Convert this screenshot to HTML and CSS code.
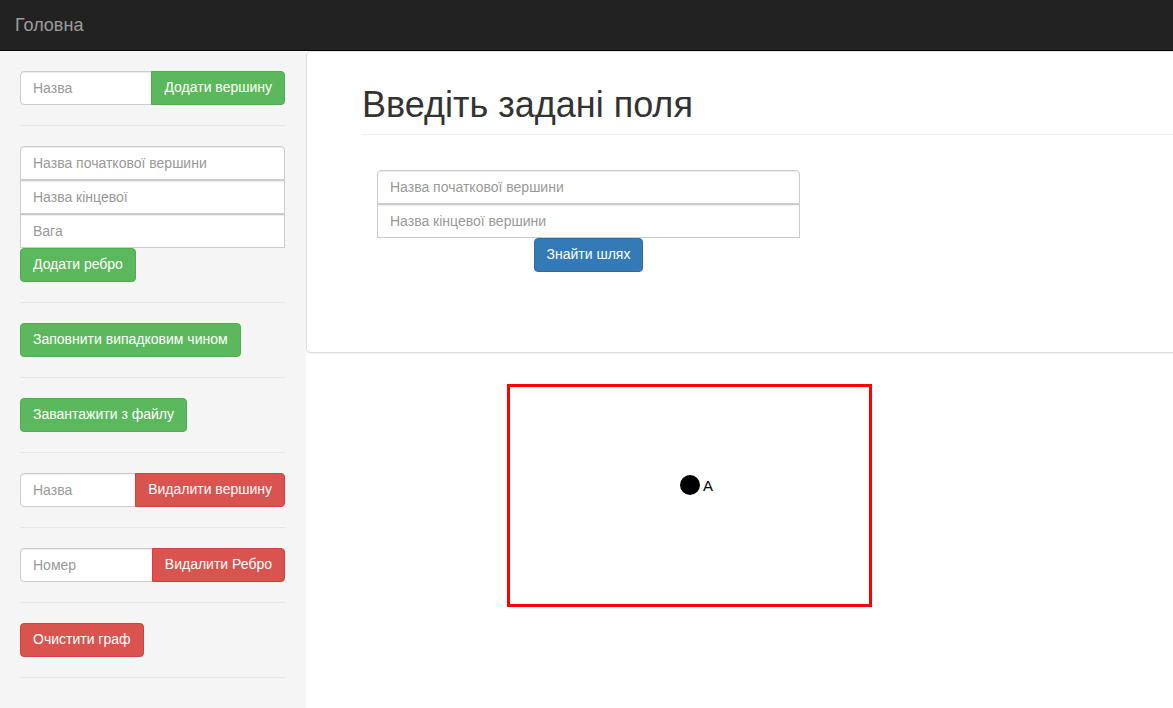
FILE: index.html
```html
<!DOCTYPE html>
<html lang="uk">
<head>
<meta charset="utf-8">
<title>Граф</title>
<link rel="stylesheet" href="styles.css">
</head>
<body>
<nav class="navbar">
  <a class="brand" href="#">Головна</a>
</nav>
<div class="layout">
  <aside class="sidebar">
    <div class="input-group">
      <input class="form-control" type="text" placeholder="Назва">
      <button class="btn btn-success grp-btn">Додати вершину</button>
    </div>
    <hr>
    <div class="stack">
      <input class="form-control" type="text" placeholder="Назва початкової вершини">
      <input class="form-control" type="text" placeholder="Назва кінцевої">
      <input class="form-control" type="text" placeholder="Вага">
    </div>
    <button class="btn btn-success">Додати ребро</button>
    <hr>
    <button class="btn btn-success">Заповнити випадковим чином</button>
    <hr>
    <button class="btn btn-success">Завантажити з файлу</button>
    <hr>
    <div class="input-group">
      <input class="form-control" type="text" placeholder="Назва">
      <button class="btn btn-danger grp-btn">Видалити вершину</button>
    </div>
    <hr>
    <div class="input-group">
      <input class="form-control" type="text" placeholder="Номер">
      <button class="btn btn-danger grp-btn">Видалити Ребро</button>
    </div>
    <hr>
    <button class="btn btn-danger">Очистити граф</button>
    <hr>
  </aside>
  <main class="main">
    <section class="panel">
      <h1 class="page-header">Введіть задані поля</h1>
      <form class="path-form">
        <div class="stack">
          <input class="form-control" type="text" placeholder="Назва початкової вершини">
          <input class="form-control" type="text" placeholder="Назва кінцевої вершини">
        </div>
        <button type="button" class="btn btn-primary">Знайти шлях</button>
      </form>
    </section>
    <div class="canvas-wrap">
      <svg class="graph" width="359" height="217" viewBox="0 0 359 217">
        <circle cx="180" cy="98" r="10" fill="#000"/>
        <text x="193" y="103.5" font-family="Liberation Sans, Arial, sans-serif" font-size="15" fill="#000">A</text>
      </svg>
    </div>
  </main>
</div>
</body>
</html>
```

FILE: styles.css
```css
* {
  box-sizing: border-box;
}

html, body {
  margin: 0;
  padding: 0;
}

body {
  font-family: "Liberation Sans", Arial, sans-serif;
  font-size: 14px;
  line-height: 1.42857;
  color: #333;
  background: #fff;
  height: 708px;
  overflow: hidden;
}

.navbar {
  height: 51px;
  background: #222;
  border-bottom: 1px solid #080808;
}

.brand {
  display: inline-block;
  padding: 15px;
  font-size: 18px;
  line-height: 20px;
  color: #9d9d9d;
  text-decoration: none;
}

.layout {
  display: flex;
  height: 657px;
}

.sidebar {
  flex: 0 0 306px;
  background: #f5f5f5;
  padding: 20px 21px 0 20px;
}

.sidebar hr {
  margin: 20px 0;
  border: 0;
  border-top: 1px solid #e6e6e6;
  height: 0;
}

.form-control {
  display: block;
  width: 100%;
  height: 34px;
  padding: 6px 12px;
  font-family: inherit;
  font-size: 14px;
  line-height: 1.42857;
  color: #555;
  background: #fff;
  border: 1px solid #ccc;
  border-radius: 4px;
  box-shadow: inset 0 1px 1px rgba(0, 0, 0, 0.075);
  outline: none;
}

.form-control::placeholder {
  color: #999;
}

.stack .form-control {
  border-radius: 0;
}

.stack .form-control:first-child {
  border-radius: 4px 4px 0 0;
}

.input-group {
  display: flex;
}

.input-group .form-control {
  flex: 1 1 auto;
  min-width: 0;
  border-radius: 4px 0 0 4px;
}

.input-group .grp-btn {
  flex: 0 0 auto;
  border-radius: 0 4px 4px 0;
  margin-left: -1px;
}

.btn {
  display: inline-block;
  height: 34px;
  padding: 6px 12px;
  font-family: inherit;
  font-size: 14px;
  line-height: 1.42857;
  color: #fff;
  white-space: nowrap;
  border: 1px solid transparent;
  border-radius: 4px;
  cursor: pointer;
}

.btn-success {
  background: #5cb85c;
  border-color: #4cae4c;
}

.btn-danger {
  background: #d9534f;
  border-color: #d43f3a;
}

.btn-primary {
  background: #337ab7;
  border-color: #2e6da4;
}

.main {
  flex: 1 1 auto;
  min-width: 0;
  overflow: hidden;
}

.panel {
  width: calc(100% + 20px);
  background: #fff;
  border: 1px solid #ddd;
  border-radius: 4px;
  box-shadow: 0 1px 1px rgba(0, 0, 0, 0.05);
  padding: 33px 0 80px 55px;
}

.page-header {
  margin: 0 0 35px 0;
  padding-bottom: 9px;
  border-bottom: 1px solid #eee;
  font-size: 36px;
  font-weight: 500;
  line-height: 1.1;
  color: #333;
}

.path-form {
  width: 423px;
  margin-left: 15px;
  text-align: center;
}

.canvas-wrap {
  padding: 31px 0 0 201px;
}

.graph {
  display: block;
  border: 3px solid #f00;
  width: 365px;
  height: 223px;
}
```
